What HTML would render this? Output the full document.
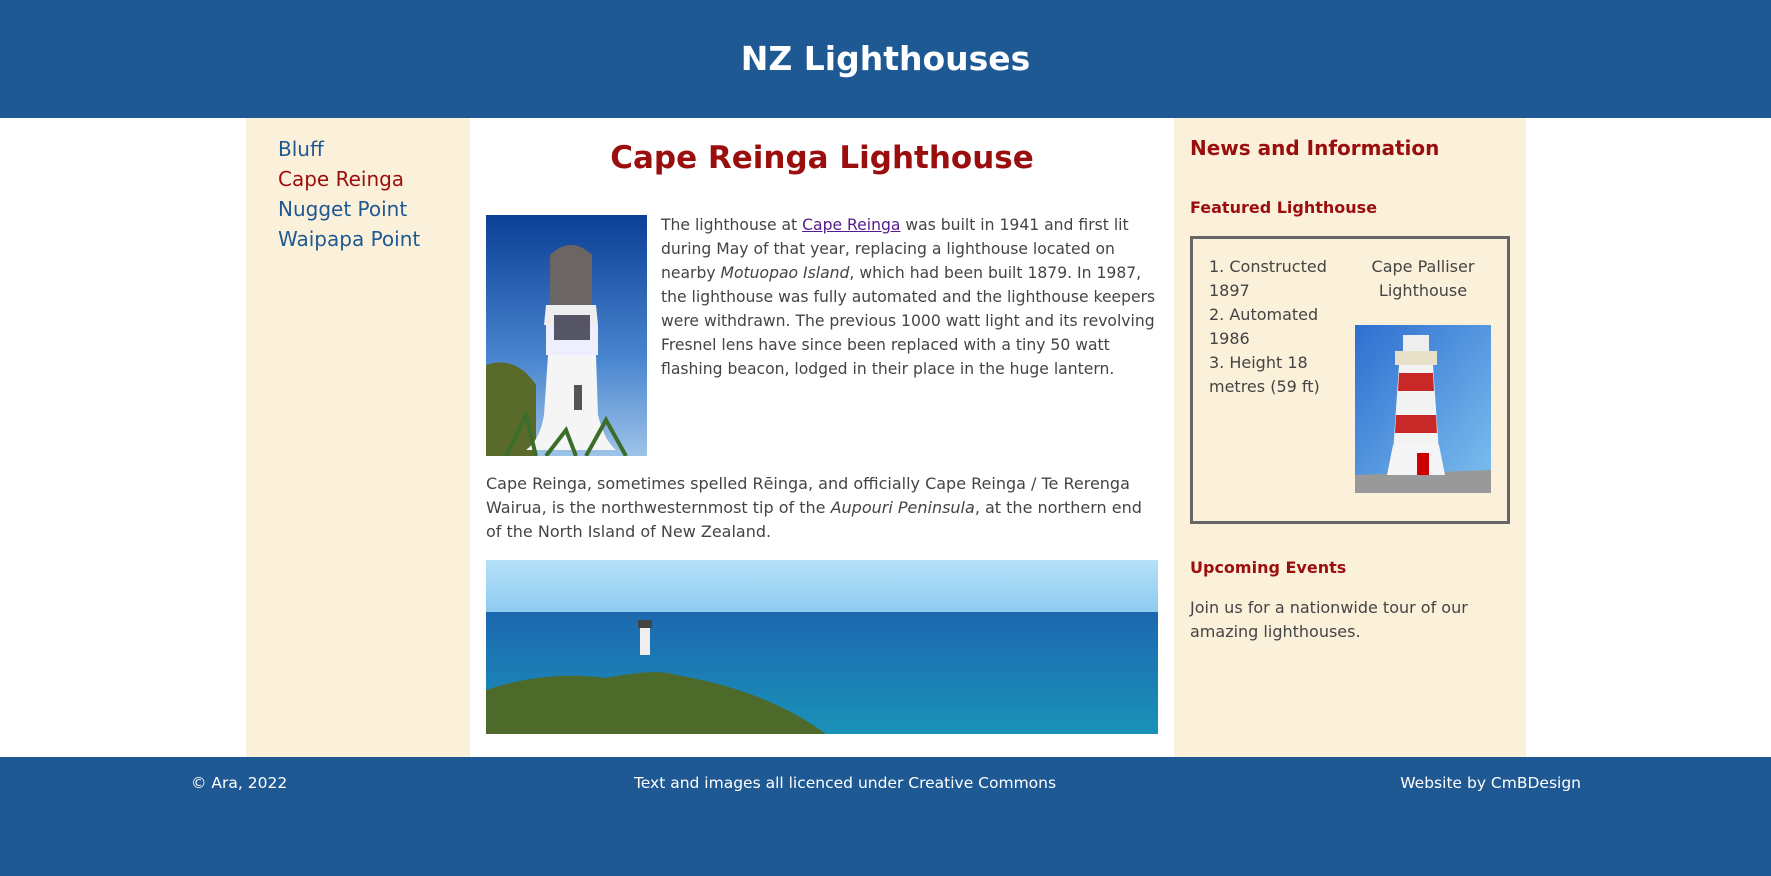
<!DOCTYPE html>
<html><head><meta charset="utf-8"><style>
*{margin:0;padding:0;box-sizing:border-box}
body{width:1771px;height:876px;overflow:hidden;background:#fff;font-family:"DejaVu Sans","Liberation Sans",sans-serif;color:#444;position:relative}
.hdr{position:absolute;left:0;top:0;width:1771px;height:118px;background:#1f5994;color:#fff;text-align:center;font-weight:bold;font-size:33px;line-height:118px}
.left{position:absolute;left:246px;top:118px;width:224px;height:639px;background:#fbf0d9}
.left a{display:block;color:#1f5994;text-decoration:none;font-size:20px;line-height:30px;padding-left:32px}
.left a.cur{color:#9b0e0e}
.main{position:absolute;left:470px;top:118px;width:704px;height:639px}
h1{position:absolute;left:0;width:704px;top:137px;text-align:center;color:#9b0e0e;font-size:31px;line-height:40px}
.p{position:absolute;font-size:16px;line-height:24px}
.right{position:absolute;left:1174px;top:118px;width:352px;height:639px;background:#fbf0d9}
.red{color:#9b0e0e;font-weight:bold;position:absolute}
.box{position:absolute;left:1190px;top:236px;width:320px;height:288px;border:3px solid #666}
.ftr{position:absolute;left:0;top:757px;width:1771px;height:119px;background:#1f5994;color:#fff;font-size:15.5px}
.ftr span{position:absolute;top:17px}
</style></head><body>
<div class="hdr">NZ Lighthouses</div>
<div class="left"><div style="height:16px"></div>
<a>Bluff</a><a class="cur">Cape Reinga</a><a>Nugget Point</a><a>Waipapa Point</a></div>
<div class="main"></div>
<h1 style="left:470px;top:138px">Cape Reinga Lighthouse</h1>
<svg style="position:absolute;left:486px;top:215px" width="161" height="241" viewBox="0 0 161 241">
<defs><linearGradient id="sk" x1="0" y1="0" x2="0" y2="1"><stop offset="0" stop-color="#0b3f95"/><stop offset=".6" stop-color="#4a86d0"/><stop offset="1" stop-color="#9ec3e8"/></linearGradient></defs>
<rect width="161" height="241" fill="url(#sk)"/>
<path d="M0 150 Q30 140 50 170 L50 241 L0 241Z" fill="#5a6a2a"/>
<path d="M60 90 L110 90 L112 110 L58 110Z" fill="#eee"/>
<path d="M64 40 Q85 20 106 40 L106 90 L64 90Z" fill="#6b6663"/>
<rect x="60" y="110" width="52" height="30" fill="#eef"/>
<rect x="68" y="100" width="36" height="25" fill="#556"/>
<path d="M62 140 L110 140 L112 200 Q118 225 130 235 L40 235 Q54 225 58 200Z" fill="#f5f5f5"/>
<rect x="88" y="170" width="8" height="25" fill="#555"/>
<path d="M20 241 L40 200 L50 241 M60 241 L80 215 L90 241 M100 241 L120 205 L140 241" stroke="#3c6d2a" stroke-width="4" fill="none"/>
</svg>
<div class="p" style="left:661px;top:213px;width:502px;font-size:15.6px">The lighthouse at <u style="color:#551a8b">Cape Reinga</u> was built in 1941 and first lit during May of that year, replacing a lighthouse located on nearby <i>Motuopao Island</i>, which had been built 1879. In 1987, the lighthouse was fully automated and the lighthouse keepers were withdrawn. The previous 1000 watt light and its revolving Fresnel lens have since been replaced with a tiny 50 watt flashing beacon, lodged in their place in the huge lantern.</div>
<div class="p" style="left:486px;top:472px;width:672px">Cape Reinga, sometimes spelled Rēinga, and officially Cape Reinga / Te Rerenga Wairua, is the northwesternmost tip of the <i>Aupouri Peninsula</i>, at the northern end of the North Island of New Zealand.</div>
<svg style="position:absolute;left:486px;top:560px" width="672" height="174" viewBox="0 0 672 174">
<defs><linearGradient id="s2" x1="0" y1="0" x2="0" y2="1"><stop offset="0" stop-color="#b5e0f8"/><stop offset="1" stop-color="#8ecbf0"/></linearGradient><linearGradient id="sea" x1="0" y1="0" x2="0" y2="1"><stop offset="0" stop-color="#1c68b0"/><stop offset="1" stop-color="#1a92b8"/></linearGradient></defs>
<rect width="672" height="52" fill="url(#s2)"/><rect y="52" width="672" height="122" fill="url(#sea)"/>
<path d="M0 130 Q60 110 120 118 Q170 108 190 115 Q280 130 340 174 L0 174Z" fill="#4d6a2a"/>
<rect x="154" y="65" width="10" height="30" fill="#eee"/><rect x="152" y="60" width="14" height="8" fill="#444"/>
</svg>
<div class="right"></div>
<div class="red" style="left:1190px;top:136px;font-size:20px">News and Information</div>
<div class="red" style="left:1190px;top:198px;font-size:16px">Featured Lighthouse</div>
<div class="box"></div>
<div class="p" style="left:1209px;top:255px;width:130px;font-size:16px;line-height:24px">1. Constructed 1897<br>2. Automated 1986<br>3. Height 18 metres (59 ft)</div>
<div class="p" style="left:1345px;top:255px;width:156px;text-align:center;font-size:16px;line-height:24px">Cape Palliser Lighthouse</div>
<svg style="position:absolute;left:1355px;top:319px" width="136" height="180" viewBox="0 0 136 168">
<defs><linearGradient id="s3" x1="0" y1="0" x2="1" y2="1"><stop offset="0" stop-color="#2d6fd0"/><stop offset="1" stop-color="#7fc0ef"/></linearGradient></defs>
<rect width="136" height="168" fill="url(#s3)"/>
<path d="M0 150 L136 145 L136 168 L0 168Z" fill="#999"/>
<rect x="48" y="10" width="26" height="16" fill="#eee"/><rect x="40" y="26" width="42" height="14" fill="#e8e0c8"/>
<path d="M44 40 L78 40 L84 128 L38 128Z" fill="#f3f3f3"/>
<path d="M44 48 L78 48 L79 66 L43 66Z M41 90 L81 90 L82 108 L40 108Z" fill="#c82828"/>
<path d="M38 120 L84 120 L90 150 L32 150Z" fill="#f5f5f5"/><rect x="62" y="128" width="12" height="22" fill="#c00"/>
</svg>
<div class="red" style="left:1190px;top:558px;font-size:16px">Upcoming Events</div>
<div class="p" style="left:1190px;top:596px;width:320px;font-size:16px">Join us for a nationwide tour of our amazing lighthouses.</div>
<div class="ftr"><span style="left:191px">© Ara, 2022</span><span style="left:0;width:1690px;text-align:center">Text and images all licenced under Creative Commons</span><span style="right:190px">Website by CmBDesign</span></div>
</body></html>
